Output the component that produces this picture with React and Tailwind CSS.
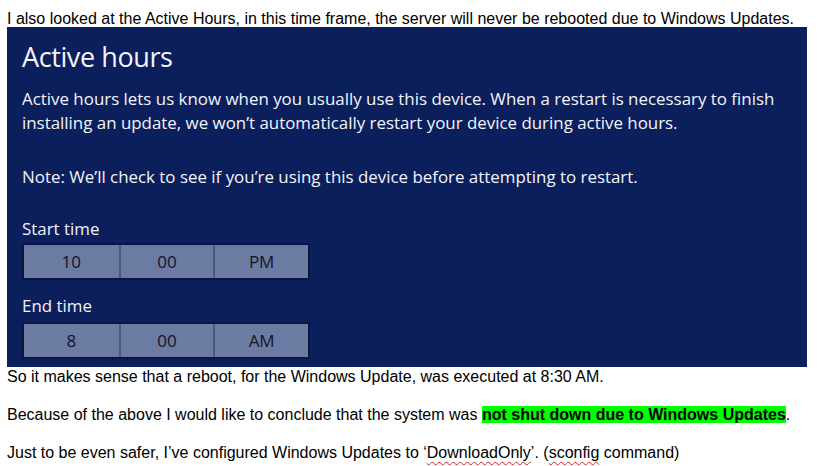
export default function App() {
  const arial = { fontFamily: '"Liberation Sans", Arial, sans-serif' };

  return (
    <div className="w-[818px] h-[466px] bg-white overflow-hidden text-black" style={arial}>
      <p className="pl-[7px] pt-[10px] text-[16px] leading-[17px] whitespace-nowrap">
        I also looked at the Active Hours, in this time frame, the server will never be rebooted due to Windows Updates.
      </p>

      {/* Screenshot of the Windows "Active hours" dialog */}
      <section
        className="ml-[7px] w-[800px] h-[340px] bg-[#0b1f5c] px-[15px] pt-[13px] text-[#f2f4fa]"
        style={{ fontFamily: '"Open Sans", "Noto Sans", sans-serif' }}
      >
        <h1 className="text-[27px] leading-[34px] font-normal tracking-[-0.4px]">Active hours</h1>
        <p className="mt-[13px] text-[16.9px] leading-[24px] whitespace-nowrap">
          Active hours lets us know when you usually use this device. When a restart is necessary to finish
          <br />
          installing an update, we won’t automatically restart your device during active hours.
        </p>
        <p className="mt-[30px] text-[16.9px] leading-[24px] whitespace-nowrap">
          Note: We’ll check to see if you’re using this device before attempting to restart.
        </p>

        <p className="mt-[28px] text-[16.9px] leading-[24px]">Start time</p>
        <TimePicker className="mt-[2px]" values={["10", "00", "PM"]} />

        <p className="mt-[14px] text-[16.9px] leading-[24px]">End time</p>
        <TimePicker className="mt-[4px]" values={["8", "00", "AM"]} />
      </section>

      <div className="pl-[7px] text-[16px] leading-[17px] whitespace-nowrap">
        <p className="pt-[1px]">So it makes sense that a reboot, for the Windows Update, was executed at 8:30 AM.</p>
        <p className="mt-[21px]">
          Because of the above I would like to conclude that the system was{" "}
          <span className="bg-[#00ff00] font-bold">not shut down due to Windows Updates</span>.
        </p>
        <p className="mt-[21px]">
          Just to be even safer, I’ve configured Windows Updates to ‘
          <span className="underline decoration-wavy decoration-[#e02020] decoration-1 underline-offset-[3px]">DownloadOnly</span>
          ’. (
          <span className="underline decoration-wavy decoration-[#e02020] decoration-1 underline-offset-[3px]">sconfig</span>{" "}
          command)
        </p>
      </div>
    </div>
  );
}

function TimePicker({ values, className = "" }) {
  return (
    <div className={`${className} w-[288px] h-[37px] border-2 border-[#0a1640] bg-[#6c7ba2] grid grid-cols-3`}>
      {values.map((v, i) => (
        <div
          key={i}
          className={`flex items-center justify-center text-[17px] text-[#10152a] ${i > 0 ? "border-l-2 border-[#4c5880]" : ""}`}
        >
          {v}
        </div>
      ))}
    </div>
  );
}
